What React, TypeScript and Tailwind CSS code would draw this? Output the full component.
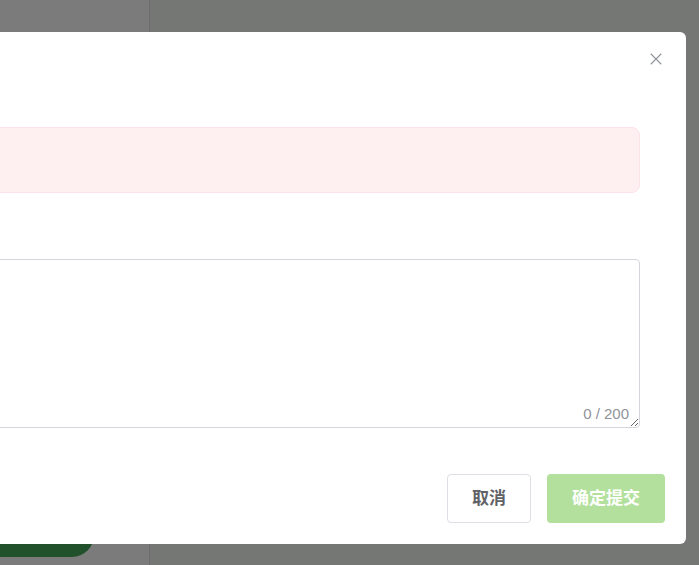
import React from 'react';

const App: React.FC = () => {
  return (
    <div
      className="relative h-[565px] w-[699px] overflow-hidden bg-[#757775]"
      style={{ fontFamily: '"Noto Sans CJK SC", "Liberation Sans", sans-serif' }}
    >
      {/* page behind the overlay */}
      <div className="flex h-full">
        <div className="flex w-[150px] flex-col justify-end border-r border-[#6c6d6c] bg-[#7b7b7b] pb-[8px]">
          <div className="ml-[-46px] h-[44px] w-[140px] rounded-full bg-[#21512a]" />
        </div>
        <div className="flex-1" />
      </div>

      {/* dialog */}
      <div className="absolute left-[-114px] top-[32px] flex h-[512px] w-[800px] flex-col rounded-md bg-white pb-[21px] pr-[21px] pt-[95px]">
        <button className="absolute right-[22px] top-[19px] flex h-[16px] w-[16px] items-center justify-center text-[#909399]">
          <svg viewBox="0 0 16 16" className="h-[14px] w-[14px]" fill="none" stroke="currentColor" strokeWidth="1.3">
            <path d="M2 2 L14 14 M14 2 L2 14" />
          </svg>
        </button>

        <div className="mr-[25px] h-[66px] rounded-lg border border-[#fbe4e7] bg-[#fef0f0]" />

        <div className="relative mr-[25px] mt-[66px] h-[169px]">
          <textarea className="h-full w-full resize-y rounded border border-[#d4d6db] bg-white outline-none" />
          <span className="absolute bottom-[6px] right-[11px] font-['Liberation_Sans',sans-serif] text-[15px] leading-[16px] text-[#909399]">
            0 / 200
          </span>
        </div>

        <div className="mt-auto flex justify-end gap-[16px]">
          <button className="h-[49px] w-[84px] rounded border border-[#dcdfe6] bg-white pb-[3px] text-[17px] font-bold text-[#606266]">
            取消
          </button>
          <button className="h-[49px] w-[118px] rounded bg-[#b3e19d] pb-[3px] text-[17px] font-bold text-white">
            确定提交
          </button>
        </div>
      </div>
    </div>
  );
};

export default App;
